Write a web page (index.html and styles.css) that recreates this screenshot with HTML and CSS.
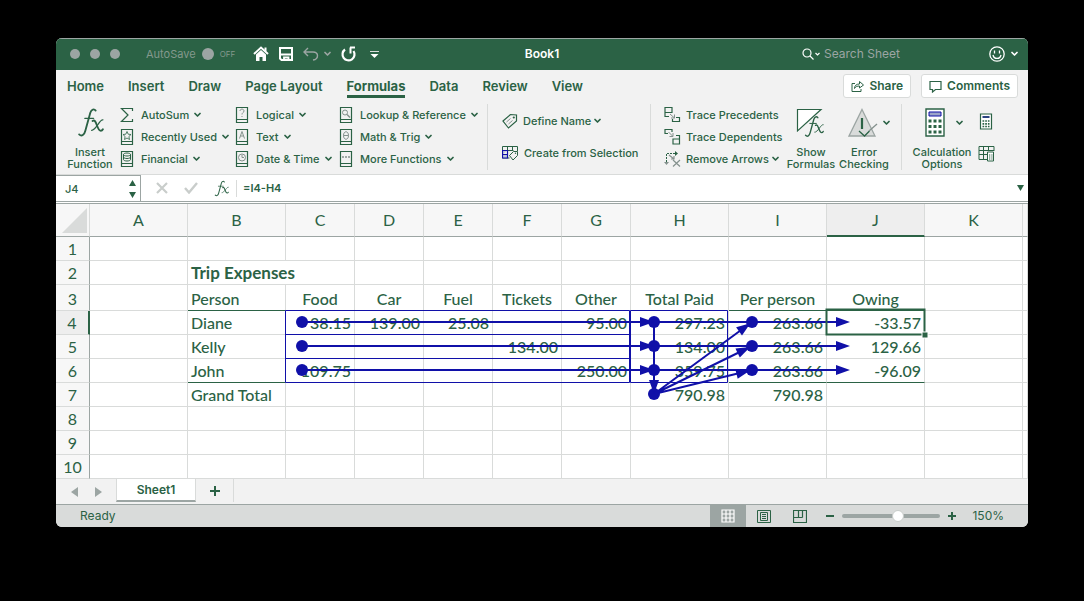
FILE: index.html
```
<!DOCTYPE html>
<html lang="en">
<head>
<meta charset="utf-8">
<title>Book1</title>
<link rel="stylesheet" href="styles.css">
</head>
<body>
<svg class="defs" aria-hidden="true">
  <symbol id="caret" viewBox="0 0 7 6"><path d="M1 1.500 3.500 4 6 1.500" fill="none" stroke="currentColor" stroke-width="1.700" stroke-linecap="round" stroke-linejoin="round"/></symbol>
  <symbol id="book" viewBox="0 0 14 18"><path d="M1.500 1.500h11v15h-11zM1.500 13.500h11" fill="none" stroke="#2b6245" stroke-width="1.200"/></symbol>
  <symbol id="fx" viewBox="0 0 26 30"><g fill="none" stroke="#2b6245" stroke-linecap="round"><path d="M18 3.500C16.500 1.500 14 2 12.800 5.500L8 23c-1 4-3.500 6-6 3.500" stroke-width="1.800"/><path d="M7.500 11h8.500" stroke-width="1.300"/><path d="M15 13.500c4-3 4 9.500 8 9.500 1 0 1.500-.5 2-1.500" stroke-width="1.800"/><path d="M25 12.500c-3-1-7 10.500-11 10" stroke-width="1.200"/></g></symbol>
</svg>
<main class="window">
  <header class="titlebar">
    <div class="title-left">
      <div class="lights"><button class="light" aria-label="Close"></button><button class="light" aria-label="Minimize"></button><button class="light" aria-label="Zoom"></button></div>
      <label class="autosave"><span>AutoSave</span><input class="switch" type="checkbox"><span class="off">OFF</span></label>
      <div class="quick">
        <button aria-label="Home"><svg width="16" height="16" viewBox="0 0 16 16"><path d="M1 8 8 1.500 15 8" fill="none" stroke="#fff" stroke-width="2"/><path d="M3 8.500 8 4l5 4.500V15H9.500v-4h-3v4H3z" fill="#fff"/><path d="M12.500 1.500v4" stroke="#fff" stroke-width="2"/></svg></button>
        <button aria-label="Save"><svg width="14" height="14" viewBox="0 0 14 14"><path d="M1 1h12v12H2.500L1 11.500z" fill="none" stroke="#fff" stroke-width="2"/><path d="M2 7.500h10M5 13v-2.500h4.500V13" fill="none" stroke="#fff" stroke-width="1.800"/></svg></button>
        <button class="dim undo" aria-label="Undo"><svg width="16" height="14" viewBox="0 0 16 14"><path d="M5 1 1 5l4 4M1 5h9c6 0 6 7 0 8" fill="none" stroke="currentColor" stroke-width="1.400"/></svg><svg width="7" height="6"><use href="#caret"/></svg></button>
        <button aria-label="Redo"><svg width="16" height="16" viewBox="0 0 16 16"><path d="M4 3.500a6 6 0 1 0 8.500 1.500" fill="none" stroke="#fff" stroke-width="2.200"/><path d="M9 1.500h5M9.500 1.500v6" fill="none" stroke="#fff" stroke-width="2"/></svg></button>
        <button class="custom" aria-label="Customize toolbar"><svg width="9" height="9" viewBox="0 0 9 9"><path d="M0 1.500h9" stroke="#d9dbda"/><path d="M.5 4h8l-4 4z" fill="#fff"/></svg></button>
      </div>
    </div>
    <h1 class="doc">Book1</h1>
    <div class="title-right">
      <label class="search"><svg width="20" height="12" viewBox="0 0 20 12"><circle cx="5" cy="5" r="4" fill="none" stroke="#fff" stroke-width="1.200"/><path d="m8 8 3.500 3.500M13.500 5l2 2 2-2" fill="none" stroke="#fff" stroke-width="1.200"/></svg><input type="text" placeholder="Search Sheet" aria-label="Search Sheet"></label>
      <button class="smile" aria-label="Feedback"><svg width="16" height="16" viewBox="0 0 16 16"><circle cx="8" cy="8" r="7.200" fill="none" stroke="#fff" stroke-width="1.300"/><path d="M5.500 4.500v3M10.500 4.500v3M4 9c1 4.500 7 4.500 8 0" fill="none" stroke="#fff" stroke-width="1.300"/></svg><svg width="7" height="6"><use href="#caret"/></svg></button>
    </div>
  </header>

  <nav class="tabs">
    <button>Home</button><button>Insert</button><button>Draw</button><button>Page Layout</button><button class="active">Formulas</button><button>Data</button><button>Review</button><button>View</button>
    <div class="tab-actions">
      <button class="pill"><svg width="13" height="12" viewBox="0 0 13 12"><path d="M4 3.500H1v8h9V9M3.500 8.500c0-3 2-4.500 5-4.500V1.500L12.500 5 8.500 8V6c-2 0-4 .5-5 2.500z" fill="none" stroke="#2b6245"/></svg>Share</button>
      <button class="pill"><svg width="13" height="13" viewBox="0 0 13 13"><path d="M1 1.500h11v8H6.500L3.500 12V9.500H1z" fill="none" stroke="#2b6245" stroke-width="1.200"/></svg>Comments</button>
    </div>
  </nav>

  <section class="ribbon" aria-label="Formulas">
    <button class="big insert"><svg width="27" height="31"><use href="#fx"/></svg><span>Insert<br>Function</span></button>
    <div class="stack library1">
      <button><svg width="14" height="18" viewBox="0 0 14 18"><path d="M12.500 5V2.500h-11L8 9l-6.500 6.500h11V13" fill="none" stroke="#2b6245" stroke-width="1.200"/></svg>AutoSum<svg class="caret"><use href="#caret"/></svg></button>
      <button><svg width="14" height="18" viewBox="0 0 14 18"><use href="#book"/><path d="m7 3.500 1.200 2.700 2.800.3-2.100 2 .6 3L7 10l-2.500 1.500.6-3L3 6.500l2.800-.3z" fill="none" stroke="#2b6245" stroke-width=".8"/></svg>Recently Used<svg class="caret"><use href="#caret"/></svg></button>
      <button><svg width="14" height="18" viewBox="0 0 14 18"><use href="#book"/><path d="M3.500 4.500c0-2 7-2 7 0v5c0 2-7 2-7 0zc0 2 7 2 7 0M3.500 7c0 2 7 2 7 0" fill="none" stroke="#2b6245"/></svg>Financial<svg class="caret"><use href="#caret"/></svg></button>
    </div>
    <div class="stack library2">
      <button><svg width="14" height="18" viewBox="0 0 14 18"><use href="#book"/><path d="M5 5c0-2.500 4-2.500 4 0 0 1.500-2 1.500-2 3.500M7 10v1" fill="none" stroke="#84918d"/></svg>Logical<svg class="caret"><use href="#caret"/></svg></button>
      <button><svg width="14" height="18" viewBox="0 0 14 18"><use href="#book"/><path d="m4.500 10.500 2.500-7 2.500 7M5.500 8h3" fill="none" stroke="#84918d"/></svg>Text<svg class="caret"><use href="#caret"/></svg></button>
      <button><svg width="14" height="18" viewBox="0 0 14 18"><use href="#book"/><circle cx="7" cy="7.500" r="3.500" fill="none" stroke="#84918d"/><path d="M7 5v2.500h2" fill="none" stroke="#84918d"/></svg>Date &amp; Time<svg class="caret"><use href="#caret"/></svg></button>
    </div>
    <div class="stack library3">
      <button><svg width="14" height="18" viewBox="0 0 14 18"><use href="#book"/><circle cx="6" cy="6.500" r="2.500" fill="none" stroke="#84918d"/><path d="m8 8.500 3 3" stroke="#84918d" stroke-width="1.400"/></svg>Lookup &amp; Reference<svg class="caret"><use href="#caret"/></svg></button>
      <button><svg width="14" height="18" viewBox="0 0 14 18"><use href="#book"/><path d="M4.500 7.500c0-5 5-5 5 0s-5 5-5 0zh5" fill="none" stroke="#84918d"/></svg>Math &amp; Trig<svg class="caret"><use href="#caret"/></svg></button>
      <button><svg width="14" height="18" viewBox="0 0 14 18"><use href="#book"/><path d="M3 7h2M6 7h2M9 7h2" stroke="#84918d" stroke-width="1.500"/></svg>More Functions<svg class="caret"><use href="#caret"/></svg></button>
    </div>
    <div class="stack names">
      <button><svg width="16" height="16" viewBox="0 0 16 16"><path d="m1 8 7.500-6.500 6 .5v6L6.500 15z" fill="none" stroke="#2b6245" stroke-width="1.200"/><circle cx="11.800" cy="4.500" r="1.100" fill="#2b6245"/><path d="m4.500 9 4-3.500M6.500 11l4-3.500" stroke="#84918d"/></svg>Define Name<svg class="caret"><use href="#caret"/></svg></button>
      <button><svg width="17" height="16" viewBox="0 0 17 16"><path d="M.5 4v9h7M.5 5V1.500h15V6M5.500 1.500v4M10.500 1.500v4M.5 5.500h11" fill="none" stroke="#2b6245"/><path d="M.5 5.500h5v4h-5zM.5 9.500v3.500h5V5.500" fill="#c2cad8" stroke="#1010a8" stroke-width="1.200"/><path d="m7.500 10.500 4-4h4v4l-4.500 4.500z" fill="#f2f2f2" stroke="#2b6245"/><circle cx="13.500" cy="8.300" r=".7" fill="#2b6245"/></svg>Create from Selection</button>
    </div>
    <div class="stack audit">
      <button><svg width="17" height="18" viewBox="0 0 17 18"><path d="M1 1.500h7v5H1zM1 6.500v4h4M12 11.500h3.500v4h-7V13" fill="none" stroke="#2b6245" stroke-width="1.200"/><path d="m6 8 4.500 4M7 12h3.500V8.500" fill="none" stroke="#84918d"/></svg>Trace Precedents</button>
      <button><svg width="17" height="18" viewBox="0 0 17 18"><path d="M4 5.500H1v-4h7V4M9 11h6.500v5H9zM12 7.500h3.500V11" fill="none" stroke="#2b6245" stroke-width="1.200"/><path d="m4.500 4 4 4M5.500 8.500H9V5" fill="none" stroke="#84918d"/></svg>Trace Dependents</button>
      <button><svg width="17" height="18" viewBox="0 0 17 18"><path d="M2.500 12V3.500H12" fill="none" stroke="#2b6245" stroke-dasharray="2 1"/><path d="m11 1 3 2.500-3 2.500z" fill="#2b6245"/><path d="M0 12h5l-2.500 3z" fill="#84918d"/><path d="m5 5 5 4M9 10l7 6.500M16 10l-7 6.500M7 9h3V6" fill="none" stroke="#84918d" stroke-width="1.200"/></svg>Remove Arrows<svg class="caret"><use href="#caret"/></svg></button>
    </div>
    <button class="big show"><svg width="30" height="31" viewBox="0 0 30 31"><path d="M1.500 24V2.500H25z" fill="#fff" stroke="#2b6245" stroke-width="1.200"/><use href="#fx" x="8" y="8" width="20" height="23"/></svg><span>Show<br>Formulas</span></button>
    <button class="big check"><span class="icon-row"><svg width="30" height="31" viewBox="0 0 30 31"><path d="M14 2.500 27 29H1z" fill="#d9dbda" stroke="#9ca5a3" stroke-width="1.300"/><path d="M14 11v11" stroke="#2b6245" stroke-width="2.200"/><path d="m11 24 5.500 5 5-5" fill="none" stroke="#2b6245" stroke-width="1.300"/><path d="m21 24 8-7" stroke="#84918d" stroke-width="1.300"/></svg><svg class="caret"><use href="#caret"/></svg></span><span>Error<br>Checking</span></button>
    <div class="calc">
      <button class="big options"><span class="icon-row"><svg width="20" height="31" viewBox="0 0 20 31"><path d="M1 2h18v27H1z" fill="#fff" stroke="#2b6245" stroke-width="1.400"/><path d="M4 5h12v4H4z" fill="#9ca5c8" stroke="#1010a8"/><path d="M3.500 14h13M3.500 19.500h13M3.500 25h13" stroke="#2b6245" stroke-width="3" stroke-dasharray="3 2"/></svg><svg class="caret"><use href="#caret"/></svg></span><span>Calculation<br>Options</span></button>
      <div class="mini">
        <button aria-label="Calculate now"><svg width="17" height="17" viewBox="0 0 17 17"><path d="M2.500 1h11v15h-11z" fill="#fff" stroke="#2b6245" stroke-width="1.200"/><path d="M4.500 4h7" stroke="#2b4280" stroke-width="2"/><path d="M4.500 8h7M4.500 10.800h7M4.500 13.500h7" stroke="#2b6245" stroke-width="1.700" stroke-dasharray="1.700 1"/></svg></button>
        <button aria-label="Calculate sheet"><svg width="17" height="17" viewBox="0 0 17 17"><path d="M9 14.500H1v-13h15V6M1 5.500h15M1 9.500h8M5.500 1.500v13M10.500 1.500V6" fill="none" stroke="#2b6245"/><path d="M9.500 7h6v9h-6z" fill="#fff" stroke="#2b6245"/><path d="M11 10h3.500M11 12h3.500M11 14h3.500" stroke="#2b6245" stroke-dasharray="1.300 1"/></svg></button>
      </div>
    </div>
  </section>

  <div class="formula-bar">
    <div class="name-box"><input type="text" value="J4" aria-label="Name box"><svg width="7" height="18" viewBox="0 0 7 18"><path d="M0 6 3.500 0 7 6zM0 12l3.500 6L7 12z" fill="#2b6245"/></svg></div>
    <div class="edit-buttons">
      <button aria-label="Cancel"><svg width="12" height="12" viewBox="0 0 12 12"><path d="m1 1 10 10M11 1 1 11" stroke="#c9cdcb" stroke-width="2.200"/></svg></button>
      <button aria-label="Enter"><svg width="14" height="12" viewBox="0 0 14 12"><path d="m1 6 4 4.500L13 1" fill="none" stroke="#c9cdcb" stroke-width="2.400"/></svg></button>
      <button aria-label="Insert function"><svg width="15" height="17"><use href="#fx"/></svg></button>
    </div>
    <input class="formula" type="text" value="=I4-H4" aria-label="Formula">
    <button class="expand" aria-label="Expand formula bar"><svg width="7" height="6"><path d="M0 0h7L3.500 6z" fill="#2b6245"/></svg></button>
  </div>

  <section class="sheet">
    <table class="grid">
      <colgroup><col class="c-head"><col class="c-wide"><col class="c-wide"><col class="c-num"><col class="c-num"><col class="c-num"><col class="c-num"><col class="c-num"><col class="c-wide"><col class="c-wide"><col class="c-wide"><col class="c-wide"><col></colgroup>
      <thead><tr><th class="corner"><svg width="25" height="25"><path d="M25 0v25H0z" fill="#d9dbda"/></svg></th><th>A</th><th>B</th><th>C</th><th>D</th><th>E</th><th>F</th><th>G</th><th>H</th><th>I</th><th class="current">J</th><th>K</th><th></th></tr></thead>
      <tbody>
        <tr><th>1</th><td></td><td></td><td></td><td></td><td></td><td></td><td></td><td></td><td></td><td></td><td></td><td></td></tr>
        <tr><th>2</th><td></td><td class="heading" colspan="2">Trip Expenses</td><td></td><td></td><td></td><td></td><td></td><td></td><td></td><td></td><td></td></tr>
        <tr class="labels"><th>3</th><td></td><td class="name rule">Person</td><td>Food</td><td>Car</td><td>Fuel</td><td>Tickets</td><td>Other</td><td>Total Paid</td><td class="rule">Per person</td><td class="rule">Owing</td><td></td><td></td></tr>
        <tr><th class="current-row">4</th><td></td><td class="name">Diane</td><td>38.15</td><td>139.00</td><td>25.08</td><td></td><td>95.00</td><td>297.23</td><td>263.66</td><td>-33.57</td><td></td><td></td></tr>
        <tr><th>5</th><td></td><td class="name">Kelly</td><td></td><td></td><td></td><td>134.00</td><td></td><td>134.00</td><td>263.66</td><td>129.66</td><td></td><td></td></tr>
        <tr><th>6</th><td></td><td class="name rule">John</td><td>109.75</td><td></td><td></td><td></td><td>250.00</td><td>359.75</td><td class="rule">263.66</td><td class="rule">-96.09</td><td></td><td></td></tr>
        <tr><th>7</th><td></td><td class="name">Grand Total</td><td></td><td></td><td></td><td></td><td></td><td>790.98</td><td>790.98</td><td></td><td></td><td></td></tr>
        <tr><th>8</th><td></td><td></td><td></td><td></td><td></td><td></td><td></td><td></td><td></td><td></td><td></td><td></td></tr>
        <tr><th>9</th><td></td><td></td><td></td><td></td><td></td><td></td><td></td><td></td><td></td><td></td><td></td><td></td></tr>
        <tr><th>10</th><td></td><td></td><td></td><td></td><td></td><td></td><td></td><td></td><td></td><td></td><td></td><td></td></tr>
      </tbody>
    </table>
    <svg class="traces" width="972" height="274" viewBox="0 0 972 274" aria-hidden="true">
      <g fill="none" stroke="#1010a8">
        <path d="M229.500 106.500h344v72h-344zM229.500 130.500h344M229.500 154.500h344"/>
        <path d="M574.500 106.500h97v72h-97z"/>
        <path d="M246 118h540M246 142h540M246 166h540M598 118v72" stroke-width="2"/>
        <path d="m598 190 98-72M598 190l98-48M598 190l98-24" stroke-width="2"/>
      </g>
      <path d="M770.500 105.500h98v25h-98z" fill="none" stroke="#2b6245" stroke-width="2"/>
      <path d="M866 128h6v6h-6z" fill="#2b6245" stroke="#fff"/>
      <g fill="#1010a8">
        <circle cx="246" cy="118" r="6"/><circle cx="246" cy="142" r="6"/><circle cx="246" cy="166" r="6"/>
        <circle cx="598" cy="118" r="6"/><circle cx="598" cy="142" r="6"/><circle cx="598" cy="166" r="6"/><circle cx="598" cy="190" r="6"/>
        <circle cx="696" cy="118" r="6"/><circle cx="696" cy="142" r="6"/><circle cx="696" cy="166" r="6"/>
        <path d="m584 113 14 5-14 5zM584 137l14 5-14 5zM584 161l14 5-14 5zM780 113l14 5-14 5zM780 137l14 5-14 5zM780 161l14 5-14 5zM593 176h10l-5 14z"/>
        <path d="m-16-5 14 5-14 5z" transform="translate(696 118) rotate(-36)"/>
        <path d="m-16-5 14 5-14 5z" transform="translate(696 142) rotate(-26)"/>
        <path d="m-16-5 14 5-14 5z" transform="translate(696 166) rotate(-14)"/>
      </g>
    </svg>
  </section>

  <div class="sheet-tabs">
    <button class="arrow" aria-label="Previous sheet"><svg width="8" height="10"><path d="M7 0v10L0 5z" fill="#9ca5a3"/></svg></button>
    <button class="arrow" aria-label="Next sheet"><svg width="8" height="10"><path d="M1 0v10l7-5z" fill="#9ca5a3"/></svg></button>
    <button class="sheet-tab">Sheet1</button>
    <button class="add" aria-label="Add sheet"><svg width="10" height="10"><path d="M5 0v10M0 5h10" stroke="#2b6245" stroke-width="2"/></svg></button>
  </div>

  <footer class="status">
    <span class="ready">Ready</span>
    <div class="views">
      <button class="selected" aria-label="Normal view"><svg width="14" height="14" viewBox="0 0 14 14"><path d="M1 1h12v12H1zM1 5h12M1 9h12M5 1v12M9 1v12" fill="none" stroke="#fff" stroke-width="1.200"/></svg></button>
      <button aria-label="Page layout view"><svg width="14" height="13" viewBox="0 0 14 13"><path d="M.5.5h13v12H.5zM3.500 2.500h7v8h-7zM5 4.500h4M5 6.500h4M5 8.500h4" fill="none" stroke="#2b6245"/></svg></button>
      <button aria-label="Page break view"><svg width="14" height="13" viewBox="0 0 14 13"><path d="M.5.5h13v12H.5zM5.500.5v7M9.500.5v7M.5 7.500h9" fill="none" stroke="#2b6245" stroke-width="1.200"/></svg></button>
    </div>
    <div class="zoom">
      <button aria-label="Zoom out"><svg width="8" height="8"><path d="M0 4h8" stroke="#2b6245" stroke-width="2"/></svg></button>
      <input type="range" min="0" max="100" value="58" aria-label="Zoom">
      <button aria-label="Zoom in"><svg width="8" height="8"><path d="M4 0v8M0 4h8" stroke="#2b6245" stroke-width="2"/></svg></button>
      <span class="percent">150%</span>
    </div>
  </footer>
</main>
</body>
</html>
```
FILE: styles.css
```
* { box-sizing: border-box; }
body {
  margin: 0;
  padding: 38px 56px;
  background: #000;
  color: #2b6245;
  font: 500 11px/16px Inter, "Liberation Sans", sans-serif;
}
button, input { font: inherit; color: inherit; margin: 0; padding: 0; border: 0; background: none; }
button { display: flex; align-items: center; }
svg { display: block; flex: none; }
.defs { position: absolute; width: 0; height: 0; }
.caret { width: 7px; height: 6px; }
.window { background: #f2f2f2; border-radius: 6px; overflow: hidden; }

.titlebar {
  display: grid;
  grid-template-columns: 1fr auto 1fr;
  align-items: center;
  height: 32px;
  padding: 0 10px 1px;
  background: #2b6245;
  border-top: 1px solid #9ca5a3;
  color: #fff;
}
.title-left, .title-right, .lights, .autosave, .quick, .search { display: flex; align-items: center; }
.lights { gap: 10px; margin: 0 26px 0 4px; }
.light { width: 10px; height: 10px; border-radius: 50%; background: #9ca5a3; }
.autosave { color: #84998d; gap: 6px; font-weight: 400; }
.switch { appearance: none; width: 12px; height: 12px; border-radius: 50%; background: #9ca5a3; }
.off { font-size: 8px; }
.quick { gap: 10px; margin-left: 18px; }
.quick .undo { gap: 5px; }
.quick .custom { margin-left: 3px; }
.dim { color: #9ca5a3; }
.doc { margin: 0; font-size: 12px; font-weight: 600; }
.title-right { justify-content: flex-end; }
.search { gap: 2px; margin-right: 8px; }
.search input { width: 157px; font-size: 12px; font-weight: 400; }
.search input::placeholder { color: #9ca5a3; opacity: 1; }
.smile { gap: 6px; }

.tabs { display: flex; gap: 24px; height: 32px; padding: 0 10px 0 11px; font-size: 13px; font-weight: 600; }
.tabs > button { height: 28px; padding-top: 6px; border-bottom: 3px solid transparent; }
.tabs > .active { border-color: #2b6245; font-weight: 700; }
.tab-actions { display: flex; gap: 10px; margin-left: auto; padding-top: 4px; font-size: 12px; }
.pill { height: 24px; gap: 5px; padding: 0 7px; background: #fff; border: 1px solid #d9dbda; border-radius: 3px; }

.ribbon { display: flex; height: 73px; padding: 2px 8px 4px; border-bottom: 1px solid #d9dbda; }
.stack { display: flex; flex-direction: column; justify-content: space-between; }
.stack button { height: 22px; gap: 7px; white-space: nowrap; }
.stack .caret { margin-left: -2px; }
.library1 { width: 115px; }
.library2 { width: 104px; }
.library3 { width: 148px; }
.names { width: 163px; padding: 6px 0 6px 14px; border-left: 1px solid #d9dbda; }
.names button, .audit button { gap: 5px; }
.audit { width: 135px; padding-left: 13px; border-left: 1px solid #d9dbda; }
.big { flex-direction: column; justify-content: space-between; padding-top: 3px; line-height: 12px; text-align: center; }
.insert { width: 52px; margin-right: 4px; }
.show { width: 52px; }
.check { width: 54px; }
.icon-row { display: flex; align-items: center; gap: 5px; padding-left: 9px; }
.calc { display: flex; gap: 6px; margin-left: 10px; padding-left: 10px; border-left: 1px solid #d9dbda; }
.options { width: 60px; }
.options .icon-row { gap: 11px; padding-left: 4px; }
.mini { display: flex; flex-direction: column; gap: 15px; padding-top: 9px; }

.formula-bar { display: flex; align-items: center; height: 29px; background: #fff; border-bottom: 3px double #9ca5a3; }
.name-box { display: flex; align-items: center; width: 85px; height: 26px; padding: 0 4px 0 9px; border: 1px solid #9ca5a3; border-width: 1px 1px 0 0; }
.name-box input { flex: 1; min-width: 0; }
.edit-buttons { display: flex; align-items: center; gap: 16px; padding: 0 7px 0 15px; border-right: 1px solid #d9dbda; }
.formula { flex: 1; min-width: 0; padding-left: 6px; font-weight: 600; }
.expand { padding: 0 4px; }

.sheet { position: relative; background: #fff; overflow: hidden; }
.grid { width: 100%; table-layout: fixed; border-collapse: separate; border-spacing: 0; font: 16px/20px Lato, "Liberation Sans", sans-serif; }
.c-head { width: 34px; }
.c-wide { width: 98px; }
.c-num { width: 69px; }
.grid th, .grid td { height: 24px; padding: 0 3px; border: 0 solid #d9dbda; border-width: 0 1px 1px 0; white-space: nowrap; line-height: 20px; }
.grid td { text-align: right; font-weight: 500; }
.grid th { background: #f7f7f7; font-weight: 400; }
.grid thead th { height: 33px; border-bottom-color: #9ca5a3; }
.grid tbody th { border-right-color: #9ca5a3; }
.grid thead .current { background: #eee; border-bottom: 2px solid #2b6245; }
.grid .current-row { background: #eee; border-right: 2px solid #2b6245; }
.grid .corner svg { margin: 0 0 0 3px; }
.grid .name, .grid .heading { text-align: left; }
.grid .heading { font-size: 17px; font-weight: 700; }
.grid .labels th, .grid .labels td { height: 26px; padding-top: 2px; text-align: center; }
.grid .labels .name { text-align: left; }
.grid .rule { border-bottom-color: #2b6245; }
.traces { position: absolute; left: 0; top: 0; }

.sheet-tabs { display: flex; height: 26px; border-bottom: 1px solid #9ca5a3; padding-left: 15px; }
.arrow { margin-right: 15px; }
.arrow + .arrow { margin-right: 14px; }
.sheet-tab { justify-content: center; width: 80px; height: 23px; background: #fff; border: 1px solid #d9dbda; border-top: 0; border-bottom: 2px solid #9ca5a3; font-size: 12px; font-weight: 600; }
.add { justify-content: center; width: 38px; height: 23px; border-right: 1px solid #d9dbda; }

.status { display: flex; align-items: center; height: 22px; padding: 0 24px; background: #d9dbda; font-size: 12px; font-weight: 400; }
.views { display: flex; align-self: stretch; margin-left: auto; }
.views button { justify-content: center; width: 36px; }
.views .selected { background: #9ca5a3; }
.zoom { display: flex; align-items: center; gap: 8px; padding-left: 8px; }
.zoom input { appearance: none; width: 98px; height: 4px; margin: 0 -4px 0 0; border-radius: 2px; background: #9ca5a3; }
.zoom input::-webkit-slider-thumb { appearance: none; width: 12px; height: 12px; border-radius: 50%; background: #fff; border: 1px solid #c9cdcb; }
.zoom input + button { margin-left: 4px; }
.percent { margin-left: 8px; }
```
